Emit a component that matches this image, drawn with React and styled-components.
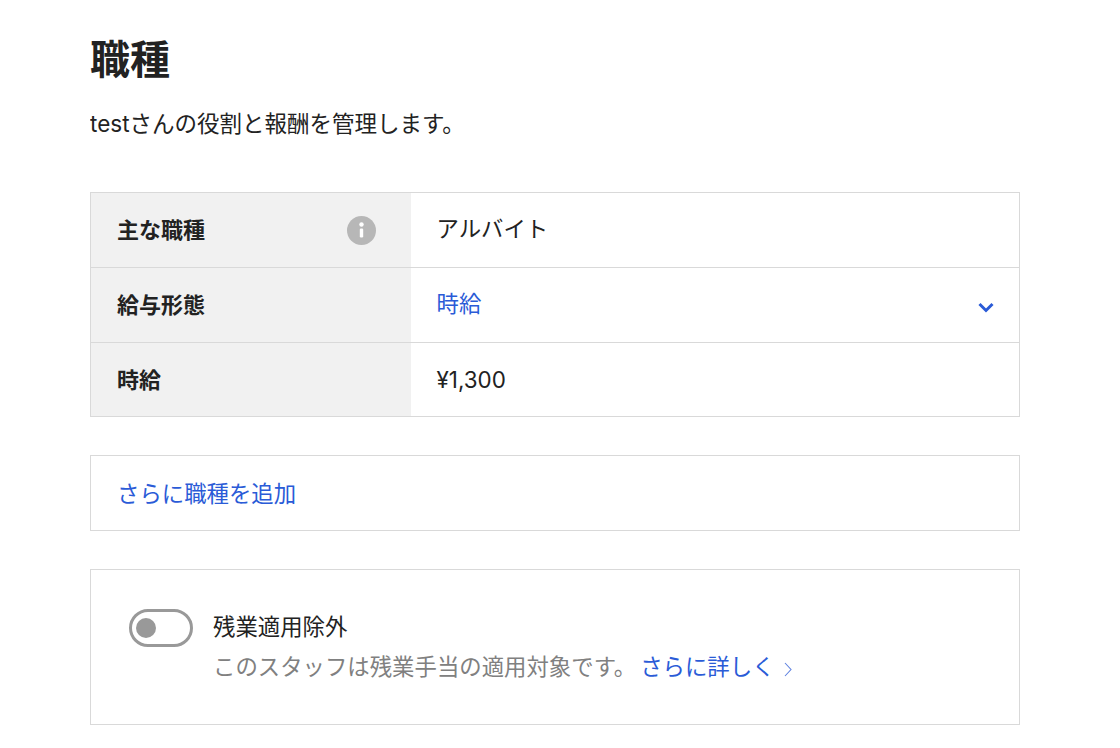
import React from "react";
import styled, { createGlobalStyle } from "styled-components";

const Global = createGlobalStyle`
  html, body { margin: 0; padding: 0; background: #fff; }
  body { font-family: "Inter", "Noto Sans CJK JP", sans-serif; color: #222; }
`;
const Page = styled.div`
  width: 930px;
  margin-left: 90px;
  height: 748px;
  overflow: hidden;
`;
const Title = styled.h1`
  margin: 0;
  padding-top: 36px;
  font-size: 40px;
  line-height: 48px;
  font-weight: 700;
  color: #222;
`;
const Lead = styled.p`
  margin: 0;
  padding-top: 24px;
  font-size: 22.5px;
  line-height: 32px;
  color: #222;
`;
const Table = styled.div`
  margin-top: 52px;
  border: 1px solid #d9d9d9;
  display: flex;
  flex-direction: column;
`;
const Row = styled.div`
  display: flex;
  height: ${p => p.$h}px;
  & + & { border-top: 1px solid #d9d9d9; }
`;
const Label = styled.div`
  width: 320px;
  box-sizing: border-box;
  background: #f1f1f1;
  padding: 0 35px 0 26px;
  display: flex;
  align-items: center;
  justify-content: space-between;
  font-size: 22px;
  line-height: 32px;
  font-weight: 700;
`;
const Value = styled.div`
  flex: 1;
  padding: 0 25px ${p => p.$lift}px 25.5px;
  display: flex;
  align-items: center;
  justify-content: space-between;
  font-size: 22.4px;
  line-height: 32px;
  color: ${p => p.$link ? "#2a5bd7" : "#222"};
`;
const Card = styled.div`
  border: 1px solid #d9d9d9;
  margin-top: ${p => p.$mt}px;
`;
const AddRow = styled(Card)`
  height: 76px;
  box-sizing: border-box;
  display: flex;
  align-items: center;
  padding: 0 0 2px 26px;
  font-size: 22.4px;
  color: #2a5bd7;
`;
const OptionCard = styled(Card)`
  height: 156px;
  box-sizing: border-box;
  padding: 39px 38px 0;
  display: flex;
  gap: 20px;
`;
const Toggle = styled.div`
  width: 64px;
  height: 38px;
  box-sizing: border-box;
  border: 3px solid #999;
  border-radius: 19px;
  flex: none;
  display: flex;
  align-items: center;
  padding-left: 4px;
`;
const Knob = styled.span`
  width: 20px;
  height: 20px;
  border-radius: 50%;
  background: #999;
`;
const OptionTitle = styled.div`
  font-size: 22.4px;
  line-height: 36px;
  color: #222;
`;
const Desc = styled.div`
  font-size: 22.4px;
  line-height: 36px;
  margin-top: 4px;
  color: #808080;
  display: flex;
  align-items: center;
`;
const Learn = styled.span`
  color: #2a5bd7;
  margin-left: 4px;
  display: inline-flex;
  align-items: center;
  gap: 9px;
`;
const ChevronSlot = styled.span`
  display: flex;
  padding-top: 7px;
`;
const ArrowSlot = styled.span`
  display: flex;
  padding-top: 4px;
`;
const Info = () => (
  <svg width="29" height="29" viewBox="0 0 29 29">
    <circle cx="14.5" cy="14.5" r="14.5" fill="#b7b7b7" />
    <circle cx="14.5" cy="8.5" r="2.2" fill="#fff" />
    <rect x="12.8" y="12.5" width="3.4" height="9" rx="1.2" fill="#fff" />
  </svg>
);
const Chevron = () => (
  <svg width="16" height="11" viewBox="0 0 16 11">
    <path d="M1.5 2 L8 8.5 L14.5 2" fill="none" stroke="#2a5bd7" strokeWidth="3" />
  </svg>
);
const Arrow = () => (
  <svg width="8" height="15" viewBox="0 0 8 15">
    <path d="M1 1 L7 7.5 L1 14" fill="none" stroke="#5f82e0" strokeWidth="1.1" />
  </svg>
);

export default function App() {
  return (
    <Page>
      <Global />
      <Title>職種</Title>
      <Lead>testさんの役割と報酬を管理します。</Lead>
      <Table>
        <Row $h={74}><Label>主な職種<Info /></Label><Value $lift={3}>アルバイト</Value></Row>
        <Row $h={74}><Label>給与形態</Label><Value $link $lift={2}>時給<ChevronSlot><Chevron /></ChevronSlot></Value></Row>
        <Row $h={73}><Label>時給</Label><Value $lift={0}>¥1,300</Value></Row>
      </Table>
      <AddRow $mt={38}>さらに職種を追加</AddRow>
      <OptionCard $mt={38}>
        <Toggle><Knob /></Toggle>
        <div>
          <OptionTitle>残業適用除外</OptionTitle>
          <Desc>このスタッフは残業手当の適用対象です。<Learn>さらに詳しく<ArrowSlot><Arrow /></ArrowSlot></Learn></Desc>
        </div>
      </OptionCard>
    </Page>
  );
}
